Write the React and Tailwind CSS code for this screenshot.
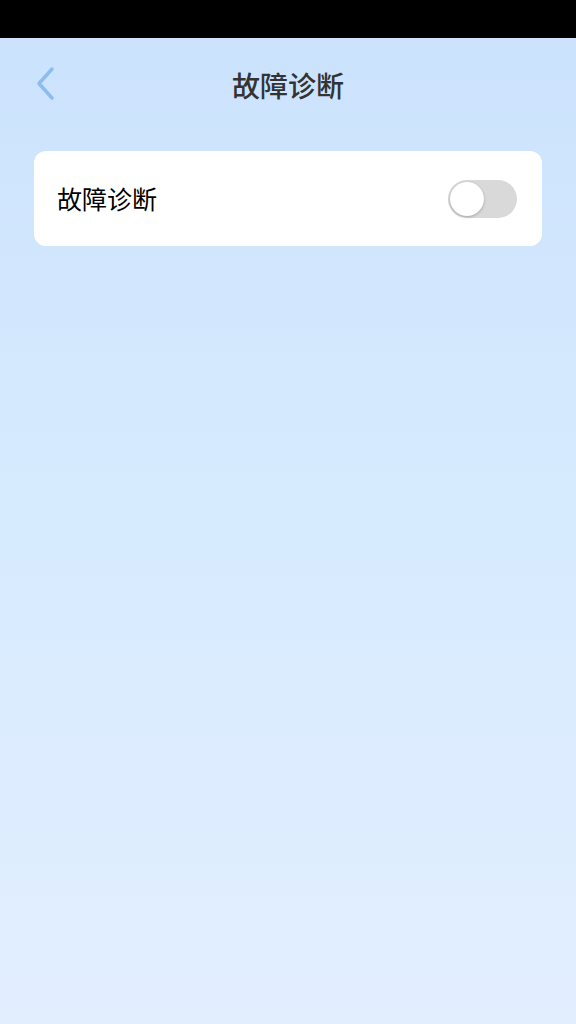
import { useState } from 'react'

export default function App() {
  const [on, setOn] = useState(false)
  return (
    <div
      className="flex min-h-[1024px] w-full flex-col bg-gradient-to-b from-[#cbe2fd] via-[#d7ebfe] to-[#e2eefe]"
      style={{ fontFamily: '"Noto Sans CJK SC", "Noto Sans", sans-serif' }}
    >
      <div className="h-[38px] bg-black" />
      <div className="relative flex h-[94px] items-center justify-center">
        <button className="absolute left-[30px] top-[28px] flex h-[36px] w-[30px] items-center justify-center">
          <svg width="22" height="36" viewBox="0 0 22 36" fill="none">
            <path d="M18 3 L5 17.5 L18 32" stroke="#8cbcf0" strokeWidth="3.5" strokeLinecap="round" strokeLinejoin="round" />
          </svg>
        </button>
        <h1 className="text-[28px] font-medium leading-none text-[#333]">故障诊断</h1>
      </div>
      <div className="mx-[34px] mt-[19px] flex h-[95px] items-center justify-between rounded-[12px] bg-white pl-[23px] pr-[25px]">
        <span className="text-[25px] leading-none text-black">故障诊断</span>
        <button
          onClick={() => setOn(!on)}
          className={`flex h-[38px] w-[69px] items-center rounded-full p-[2px] ${on ? 'justify-end bg-[#4a90e2]' : 'justify-start bg-[#d9d9d9]'}`}
        >
          <span className="h-[34px] w-[34px] rounded-full bg-white shadow-[0_1px_3px_rgba(0,0,0,0.25)]" />
        </button>
      </div>
    </div>
  )
}
